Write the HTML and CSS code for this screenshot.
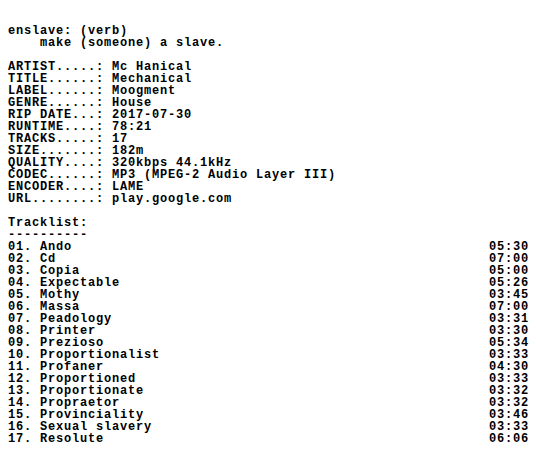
FILE: index.html
```html
<!DOCTYPE html>
<html>
<head>
<meta charset="utf-8">
<link rel="stylesheet" href="styles.css">
</head>
<body>
<div class="nfo">
<pre class="block">enslave: (verb)
    make (someone) a slave.</pre>
<pre class="block">ARTIST.....: Mc Hanical
TITLE......: Mechanical
LABEL......: Moogment
GENRE......: House
RIP DATE...: 2017-07-30
RUNTIME....: 78:21
TRACKS.....: 17
SIZE.......: 182m
QUALITY....: 320kbps 44.1kHz
CODEC......: MP3 (MPEG-2 Audio Layer III)
ENCODER....: LAME
URL........: play.google.com</pre>
<section class="tracklist">
<pre class="block">Tracklist:
----------</pre>
<ul class="tracks">
<li class="track"><span>01. Ando</span><span>05:30</span></li>
<li class="track"><span>02. Cd</span><span>07:00</span></li>
<li class="track"><span>03. Copia</span><span>05:00</span></li>
<li class="track"><span>04. Expectable</span><span>05:26</span></li>
<li class="track"><span>05. Mothy</span><span>03:45</span></li>
<li class="track"><span>06. Massa</span><span>07:00</span></li>
<li class="track"><span>07. Peadology</span><span>03:31</span></li>
<li class="track"><span>08. Printer</span><span>03:30</span></li>
<li class="track"><span>09. Prezioso</span><span>05:34</span></li>
<li class="track"><span>10. Proportionalist</span><span>03:33</span></li>
<li class="track"><span>11. Profaner</span><span>04:30</span></li>
<li class="track"><span>12. Proportioned</span><span>03:33</span></li>
<li class="track"><span>13. Proportionate</span><span>03:32</span></li>
<li class="track"><span>14. Propraetor</span><span>03:32</span></li>
<li class="track"><span>15. Provinciality</span><span>03:46</span></li>
<li class="track"><span>16. Sexual slavery</span><span>03:33</span></li>
<li class="track"><span>17. Resolute</span><span>06:06</span></li>
</ul>
</section>
</div>
</body>
</html>
```

FILE: styles.css
```css
html, body {
  margin: 0;
  padding: 0;
  background: #ffffff;
}
body {
  padding: 25px 8px 0 8px;
  color: #000000;
  font-family: "Liberation Mono", "Courier New", monospace;
  font-weight: bold;
  font-size: 12px;
  letter-spacing: 0.8px;
  line-height: 12px;
}
.nfo {
  width: 521px;
  display: flex;
  flex-direction: column;
  gap: 12px;
}
.block {
  margin: 0;
  font: inherit;
  letter-spacing: inherit;
  white-space: pre;
}
.tracklist {
  display: flex;
  flex-direction: column;
}
.tracks {
  list-style: none;
  margin: 0;
  padding: 0;
}
.track {
  display: flex;
  justify-content: space-between;
  white-space: pre;
}
```
